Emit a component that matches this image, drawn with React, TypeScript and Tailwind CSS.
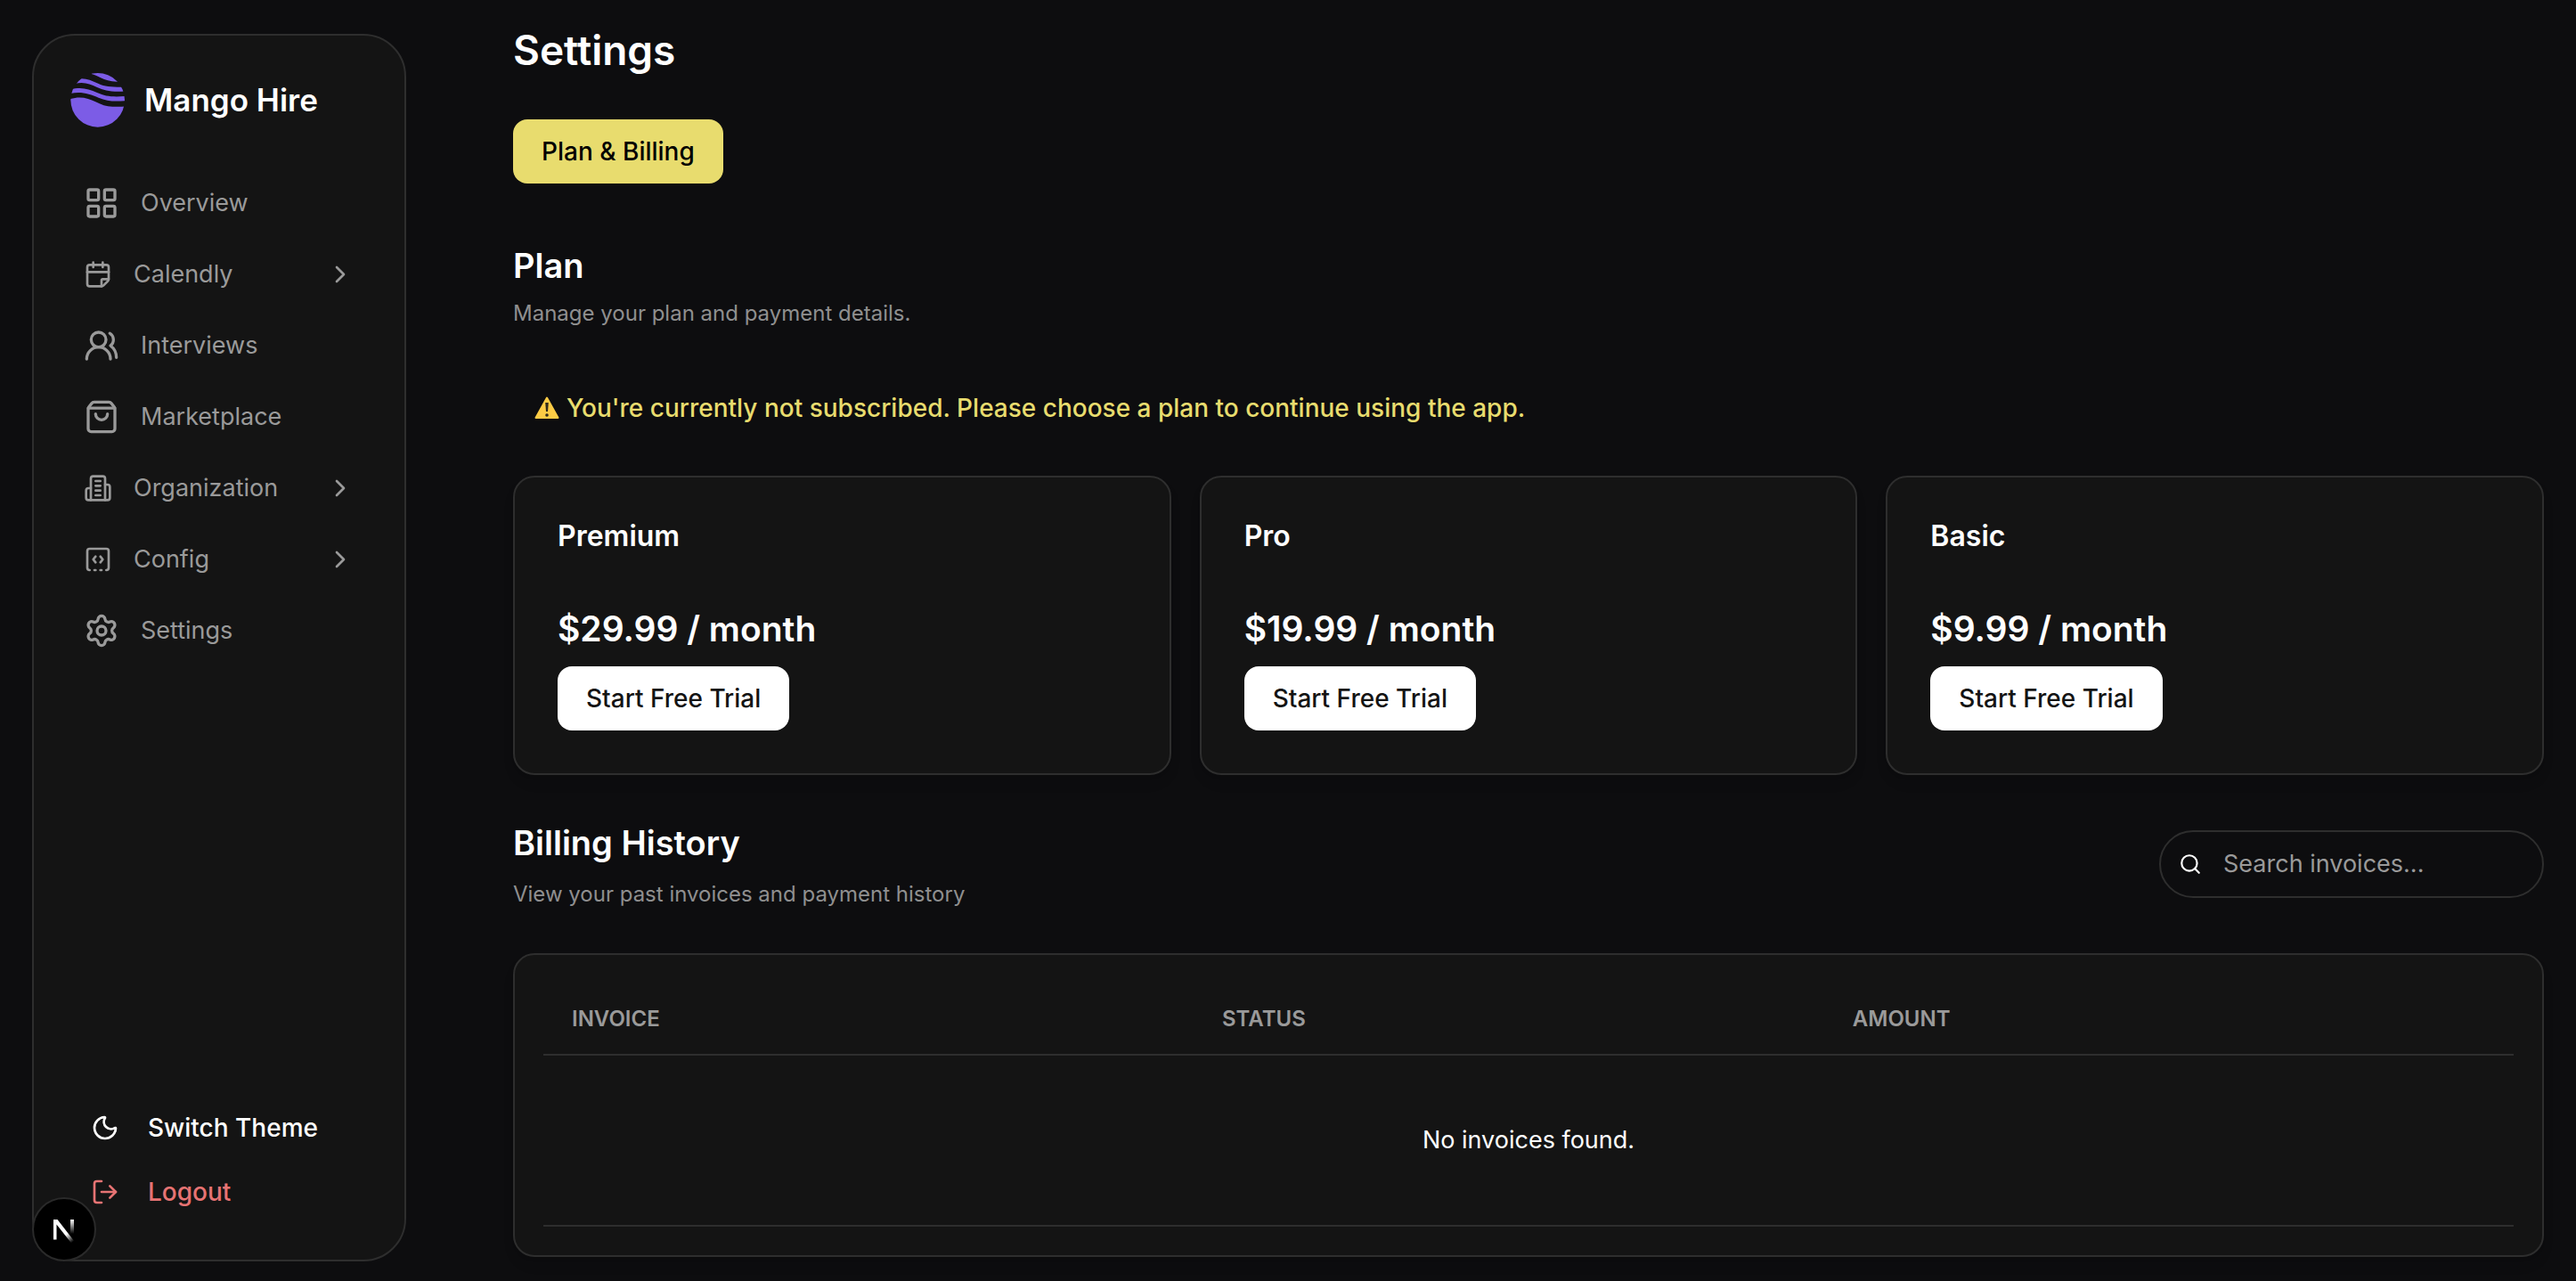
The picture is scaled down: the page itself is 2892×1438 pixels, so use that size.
import {
  LayoutGrid,
  CalendarFold,
  UsersRound,
  ShoppingBag,
  SquareDashedBottomCode,
  Settings,
  ChevronRight,
  Moon,
  LogOut,
  Search,
} from "lucide-react";
import type { ComponentType } from "react";

type IconProps = { className?: string };
type NavItem = { label: string; icon: ComponentType<IconProps>; group?: boolean };

function BuildingIcon({ className }: IconProps) {
  return (
    <svg className={className} viewBox="0 0 24 24" fill="none" stroke="currentColor" strokeWidth="2" strokeLinecap="round" strokeLinejoin="round" aria-hidden="true">
      <path d="M6 22V4a2 2 0 0 1 2-2h8a2 2 0 0 1 2 2v18Z" />
      <path d="M6 12H4a2 2 0 0 0-2 2v6a2 2 0 0 0 2 2h2" />
      <path d="M18 9h2a2 2 0 0 1 2 2v9a2 2 0 0 1-2 2h-2" />
      <path d="M10 6h4M10 10h4M10 14h4M10 18h4" />
    </svg>
  );
}

function MangoLogo() {
  return (
    <svg className="size-16 shrink-0" viewBox="12 18 192 192" aria-hidden="true">
      <defs>
        <clipPath id="logo-disc">
          <circle cx="107" cy="115" r="91" />
        </clipPath>
      </defs>
      <g clipPath="url(#logo-disc)" fill="#7c5ce6">
        <path d="M86 27 C106 30 124 51 172 53 L204 53 V18 H86 Z" />
        <path d="M30 46 C60 37 82 47 105 58 S150 73 204 70 V85 C155 89 130 83 105 72 S62 53 30 60 Z" />
        <path d="M12 80 C50 69 76 77 105 90 S155 105 204 102 V117 C162 121 140 119 110 107 S50 84 12 94 Z" />
        <path d="M12 112 C45 101 72 106 105 123 S155 138 204 136 V210 H12 Z" />
      </g>
    </svg>
  );
}

function WarningIcon() {
  return (
    <svg className="size-7 shrink-0" viewBox="0 0 28 28" aria-hidden="true">
      <path d="M14 2.500 26.500 25H1.500Z" fill="#fccb45" stroke="#fccb45" strokeWidth="2" strokeLinejoin="round" />
      <path d="M12.200 8h3.600l-.8 10h-2Z" fill="#2f2a1c" />
      <circle cx="14" cy="22" r="1.800" fill="#2f2a1c" />
    </svg>
  );
}

const navItems: NavItem[] = [
  { label: "Overview", icon: LayoutGrid },
  { label: "Calendly", icon: CalendarFold, group: true },
  { label: "Interviews", icon: UsersRound },
  { label: "Marketplace", icon: ShoppingBag },
  { label: "Organization", icon: BuildingIcon, group: true },
  { label: "Config", icon: SquareDashedBottomCode, group: true },
  { label: "Settings", icon: Settings },
];

const plans = [
  { name: "Premium", price: "$29.99 / month" },
  { name: "Pro", price: "$19.99 / month" },
  { name: "Basic", price: "$9.99 / month" },
];

function NavEntry({ label, icon: Icon, group }: NavItem) {
  const row = "flex h-20 w-full items-center gap-6 text-[27px] text-[#9a9a9a]";
  if (group) {
    return (
      <button type="button" aria-expanded="false" className={row}>
        <Icon className="size-8" />
        <span>{label}</span>
        <ChevronRight className="ml-auto size-8" />
      </button>
    );
  }
  return (
    <a href="#" className={row}>
      <Icon className="size-10" />
      <span>{label}</span>
    </a>
  );
}

function Sidebar() {
  return (
    <aside className="relative flex w-[420px] shrink-0 flex-col rounded-[48px] border-2 border-[#2e2e2e] bg-[#141414] p-10">
      <div className="flex items-center gap-5">
        <MangoLogo />
        <span className="text-[35px] font-semibold">Mango Hire</span>
      </div>
      <nav className="mt-11 flex flex-col px-4">
        {navItems.map((item) => (
          <NavEntry key={item.label} {...item} />
        ))}
      </nav>
      <div className="mt-auto flex flex-col px-6 text-[28px] font-medium">
        <button type="button" className="flex h-18 items-center gap-8">
          <Moon className="size-8" />
          Switch Theme
        </button>
        <button type="button" className="flex h-18 items-center gap-8 text-[#e77373]">
          <LogOut className="size-8" />
          Logout
        </button>
      </div>
      <button
        type="button"
        aria-label="Open Next.js Dev Tools"
        className="absolute -bottom-0.5 -left-0.5 flex size-[72px] items-center justify-center rounded-full border-2 border-[#2a2a2a] bg-black"
      >
        <svg className="size-10 shrink-0" viewBox="0 0 40 40" aria-hidden="true">
          <defs>
            <linearGradient id="n-diagonal" x1="23" y1="25" x2="30" y2="34" gradientUnits="userSpaceOnUse">
              <stop stopColor="#fff" />
              <stop offset="1" stopColor="#fff" stopOpacity="0" />
            </linearGradient>
            <linearGradient id="n-stem" x1="29" y1="9" x2="29" y2="25" gradientUnits="userSpaceOnUse">
              <stop stopColor="#fff" />
              <stop offset="1" stopColor="#fff" stopOpacity="0" />
            </linearGradient>
          </defs>
          <path d="M8 31.500V9H12.500L31.500 33.500L28.500 36L11.500 14.500V31.500Z" fill="url(#n-diagonal)" />
          <path d="M27 9h4v16h-4Z" fill="url(#n-stem)" />
        </svg>
      </button>
    </aside>
  );
}

export default function App() {
  return (
    <div className="flex min-h-screen bg-[#0d0d0f] font-['Inter',sans-serif] text-white">
      <div className="flex pt-[38px] pb-[22px] pl-9">
        <Sidebar />
      </div>
      <main className="min-w-0 flex-1 pt-5 pr-9 pb-6 pl-[120px]">
        <h1 className="text-[46px] leading-[72px] font-semibold">Settings</h1>
        <button type="button" className="mt-[42px] h-18 rounded-2xl bg-[#e8dc6e] px-8 text-[28px] font-medium text-black">
          Plan &amp; Billing
        </button>

        <section className="mt-16">
          <h2 className="text-[38px] leading-14 font-semibold">Plan</h2>
          <p className="mt-2 text-[24px] leading-9 text-[#8f8f8f]">Manage your plan and payment details.</p>
          <p className="mt-13 flex h-18 items-center gap-2 px-6 text-[28px] font-medium text-[#e8dc6e]">
            <WarningIcon />
            You're currently not subscribed. Please choose a plan to continue using the app.
          </p>
          <div className="mt-10 grid grid-cols-3 gap-8">
            {plans.map((plan) => (
              <article key={plan.name} className="rounded-3xl border-2 border-[#2e2e2e] bg-[#141414] p-12 shadow-lg">
                <h3 className="text-[32px] leading-9 font-semibold">{plan.name}</h3>
                <p className="mt-14 text-[39px] leading-[60px] font-semibold">{plan.price}</p>
                <button type="button" className="mt-3 h-18 rounded-2xl bg-white px-8 text-[28px] font-medium text-[#141414]">
                  Start Free Trial
                </button>
              </article>
            ))}
          </div>
        </section>

        <section className="mt-12">
          <div className="flex items-center justify-between">
            <div>
              <h2 className="text-[38px] leading-14 font-semibold">Billing History</h2>
              <p className="mt-3 text-[24px] leading-9 text-[#8f8f8f]">View your past invoices and payment history</p>
            </div>
            <label className="flex h-[76px] w-[432px] items-center gap-6 rounded-full border-2 border-[#2e2e2e] px-5">
              <Search className="size-[26px]" />
              <input
                type="text"
                aria-label="Search invoices"
                placeholder="Search invoices..."
                className="min-w-0 flex-1 bg-transparent text-[27px] outline-none placeholder:text-[#9a9a9a]"
              />
            </label>
          </div>
          <div className="mt-12 rounded-3xl border-2 border-[#2e2e2e] bg-[#141414] p-8 shadow-lg">
            <table className="w-full border-collapse text-left">
              <thead>
                <tr className="border-b-2 border-[#2e2e2e] text-[24px] text-[#9a9a9a]">
                  <th className="h-20 w-[33%] px-8 font-semibold">INVOICE</th>
                  <th className="h-20 w-[32%] px-8 font-semibold">STATUS</th>
                  <th className="h-20 px-8 font-semibold">AMOUNT</th>
                </tr>
              </thead>
              <tbody>
                <tr className="border-b-2 border-[#2e2e2e]">
                  <td colSpan={3} className="h-48 text-center text-[27px]">No invoices found.</td>
                </tr>
              </tbody>
            </table>
          </div>
        </section>
      </main>
    </div>
  );
}
